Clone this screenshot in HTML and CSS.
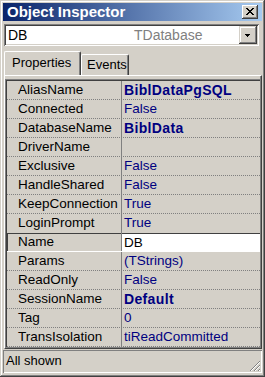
FILE: index.html
```html
<!DOCTYPE html>
<html>
<head>
<meta charset="utf-8">
<link rel="stylesheet" href="styles.css">
</head>
<body>
<div class="window">
  <div class="titlebar">
    <span class="title">Object Inspector</span>
    <div class="close"><svg width="8" height="7" viewBox="0 0 8 7" shape-rendering="crispEdges"><path d="M0 0h2v1h-2zM6 0h2v1h-2zM1 1h2v1h-2zM5 1h2v1h-2zM2 2h4v1h-4zM3 3h2v1h-2zM2 4h4v1h-4zM1 5h2v1h-2zM5 5h2v1h-2zM0 6h2v1h-2zM6 6h2v1h-2z" fill="#000"/></svg></div>
  </div>
  <div class="combo">
    <span class="obj">DB</span>
    <span class="type">TDatabase</span>
    <div class="drop"><svg width="5" height="3" viewBox="0 0 5 3" shape-rendering="crispEdges"><path d="M0 0h5v1h-5zM1 1h3v1h-3zM2 2h1v1h-1z" fill="#000"/></svg></div>
  </div>
  <div class="tabs">
    <div class="tab active">Properties</div>
    <div class="tab events">Events</div>
  </div>
  <div class="page">
    <div class="grid">
      <div class="row"><div class="name">AliasName</div><div class="val bold">BiblDataPgSQL</div></div>
      <div class="row"><div class="name">Connected</div><div class="val">False</div></div>
      <div class="row"><div class="name">DatabaseName</div><div class="val bold">BiblData</div></div>
      <div class="row"><div class="name">DriverName</div><div class="val"></div></div>
      <div class="row"><div class="name">Exclusive</div><div class="val">False</div></div>
      <div class="row"><div class="name">HandleShared</div><div class="val">False</div></div>
      <div class="row"><div class="name">KeepConnection</div><div class="val">True</div></div>
      <div class="row pre"><div class="name">LoginPrompt</div><div class="val">True</div></div>
      <div class="row sel"><div class="name">Name</div><div class="val edit">DB</div></div>
      <div class="row"><div class="name">Params</div><div class="val">(TStrings)</div></div>
      <div class="row"><div class="name">ReadOnly</div><div class="val">False</div></div>
      <div class="row"><div class="name">SessionName</div><div class="val bold">Default</div></div>
      <div class="row"><div class="name">Tag</div><div class="val">0</div></div>
      <div class="row"><div class="name">TransIsolation</div><div class="val">tiReadCommitted</div></div>
    </div>
  </div>
  <div class="status">
    <span class="stext">All shown</span>
    <svg class="grip" width="12" height="12" viewBox="0 0 12 12">
      <path d="M11 1L1 11M11 5L5 11M11 9L9 11" stroke="#808080" stroke-width="1"/>
      <path d="M11 2L2 11M11 6L6 11M11 10L10 11" stroke="#fff" stroke-width="1"/>
    </svg>
  </div>
</div>
</body>
</html>
```
FILE: styles.css
```css
html, body {
  margin: 0;
  padding: 0;
  background: #d4d0c8;
}
body {
  font-family: "Liberation Sans", Arial, sans-serif;
  font-size: 13.5px;
  color: #000;
}
.window {
  width: 265px;
  height: 377px;
  box-sizing: border-box;
  padding: 3px 3px 4px 3px;
  background: #d4d0c8;
  box-shadow: inset -1px -1px #404040, inset 1px 1px #d4d0c8, inset -2px -2px #808080, inset 2px 2px #fff;
  display: flex;
  flex-direction: column;
}
.titlebar {
  height: 18px;
  flex: none;
  background: linear-gradient(to right, #0a246a, #a6caf0);
  display: flex;
  align-items: center;
  justify-content: space-between;
  padding: 0 4px 0 4px;
}
.title {
  color: #fff;
  font-weight: bold;
  font-size: 15px;
  line-height: 18px;
}
.close {
  width: 16px;
  height: 14px;
  box-sizing: border-box;
  background: #d4d0c8;
  box-shadow: inset -1px -1px #404040, inset 1px 1px #fff, inset -2px -2px #808080, inset 2px 2px #d4d0c8;
  display: flex;
  align-items: center;
  justify-content: center;
  padding: 0 1px 1px 0;
}
.close svg { display: block; }
.combo {
  flex: none;
  height: 22px;
  margin: 3px 3px 0 1px;
  box-sizing: border-box;
  background: #fff;
  box-shadow: inset 1px 1px #808080, inset -1px -1px #fff, inset 2px 2px #404040, inset -2px -2px #d4d0c8;
  padding: 2px;
  display: flex;
  align-items: center;
  font-size: 14px;
}
.obj {
  width: 126px;
  padding-left: 2px;
  flex: none;
}
.type {
  flex: 1;
  color: #808080;
}
.drop {
  width: 18px;
  height: 18px;
  box-sizing: border-box;
  background: #d4d0c8;
  box-shadow: inset -1px -1px #404040, inset 1px 1px #d4d0c8, inset -2px -2px #808080, inset 2px 2px #fff;
  display: flex;
  align-items: center;
  justify-content: center;
  padding: 1px 1px 0 0;
}
.drop svg { display: block; }
.tabs {
  flex: none;
  height: 24px;
  margin: 5px 0 0 1px;
  display: flex;
  align-items: flex-end;
}
.tab {
  box-sizing: border-box;
  height: 21px;
  padding: 0 6px;
  border-top: 1px solid #fff;
  border-left: 1px solid #fff;
  border-right: 1px solid #404040;
  box-shadow: inset -1px 0 #808080;
  border-radius: 2px 2px 0 0;
  font-size: 13px;
  line-height: 20px;
  white-space: nowrap;
}
.tab.active {
  height: 24px;
  width: 77px;
  padding: 0 0 0 7px;
  line-height: 21px;
}
.tab.events {
  width: 48px;
  padding: 0 0 0 5px;
}
.page {
  flex: 1;
  min-height: 0;
  border-top: 1px solid #fff;
  border-left: 1px solid #fff;
  border-right: 1px solid #404040;
  border-bottom: 1px solid #404040;
  margin-left: 1px;
  padding: 3px 1px 0 0;
  box-shadow: inset -1px -1px #808080;
}
.grid {
  border-top: 1px solid #808080;
  border-left: 1px solid #808080;
  box-shadow: inset 1px 1px #404040;
  padding: 1px 0 0 1px;
}
.row {
  display: flex;
  height: 19px;
  box-sizing: border-box;
  position: relative;
}
.row::after {
  content: "";
  position: absolute;
  left: 0;
  right: 0;
  bottom: 0;
  height: 1px;
  background: repeating-linear-gradient(to right, #808080 0 1px, transparent 1px 2px);
}
.row.pre::after { display: none; }
.name {
  width: 115px;
  flex: none;
  box-sizing: border-box;
  padding-left: 11px;
  border-right: 1px solid #808080;
  line-height: 18px;
  white-space: nowrap;
  overflow: hidden;
}
.val {
  flex: 1;
  padding-left: 2px;
  line-height: 18px;
  color: #000080;
  white-space: nowrap;
  overflow: hidden;
}
.val.bold {
  font-weight: bold;
  font-size: 14px;
  letter-spacing: 0.35px;
}
.row.sel {
  box-shadow: inset 0 1px #404040, inset 1px 0 #404040;
}
.row.sel::after {
  background: #fff;
}
.row.sel .val.edit {
  background: #fff;
  color: #000;
  margin-top: 1px;
  line-height: 17px;
}
.status {
  flex: none;
  height: 23px;
  margin-top: 1px;
  box-sizing: border-box;
  box-shadow: inset 1px 1px #808080, inset -1px -1px #fff;
  display: flex;
  align-items: center;
  justify-content: space-between;
  padding: 0 1px 1px 3px;
  font-size: 13px;
}
.stext {
  line-height: 20px;
}
.grip {
  align-self: flex-end;
  display: block;
}
```
